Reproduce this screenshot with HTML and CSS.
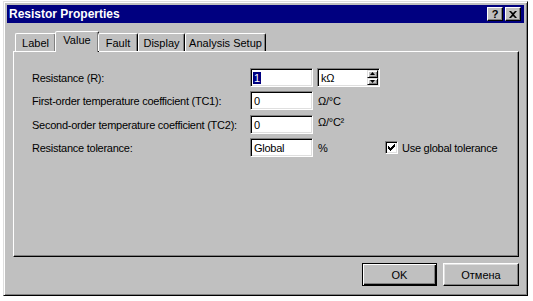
FILE: index.html
```html
<!DOCTYPE html>
<html lang="en">
<head>
  <meta charset="UTF-8">
  <title>Resistor Properties</title>
  <link rel="stylesheet" href="styles.css">
</head>
<body>
  <div class="window">
    <div class="titlebar">
      <span class="title">Resistor Properties</span>
      <div class="title-buttons">
        <span class="tbtn">?</span>
        <span class="tbtn">
          <svg width="8" height="7" viewBox="0 0 8 7"><path d="M0 0h2l2 2 2-2h2L5 3.5 8 7H6L4 5 2 7H0l3-3.5z" fill="#000"/></svg>
        </span>
      </div>
    </div>

    <div class="content">
      <!-- tabs -->
      <div class="tabs">
        <div class="tab tab-label">Label</div>
        <div class="tab tab-value active">Value</div>
        <div class="tab tab-fault">Fault</div>
        <div class="tab tab-display">Display</div>
        <div class="tab tab-analysis">Analysis Setup</div>
      </div>

      <div class="panel">
        <div class="form">
          <label class="lbl">Resistance (R):</label>
          <div class="field"><span class="sel">1</span></div>
          <div class="combo">
            <span class="combo-text">kΩ</span>
            <div class="spin">
              <span class="spin-btn"><svg width="5" height="3" viewBox="0 0 5 3"><path d="M2.5 0L5 3H0z" fill="#000"/></svg></span>
              <span class="spin-btn"><svg width="5" height="3" viewBox="0 0 5 3"><path d="M0 0h5L2.5 3z" fill="#000"/></svg></span>
            </div>
          </div>
          <span></span>

          <label class="lbl">First-order temperature coefficient (TC1):</label>
          <div class="field">0</div>
          <span class="unit">Ω/°C</span>
          <span></span>

          <label class="lbl">Second-order temperature coefficient (TC2):</label>
          <div class="field">0</div>
          <span class="unit unit-top">Ω/°C²</span>
          <span></span>

          <label class="lbl">Resistance tolerance:</label>
          <div class="field">Global</div>
          <span class="unit">%</span>
          <div class="check">
            <span class="box">
              <svg width="7" height="7" viewBox="0 0 7 7"><path d="M0 2h1v1h1v1h1V3h1V2h1V1h1V0h1v3H6v1H5v1H4v1H3v1H2V6H1V5H0z" fill="#000"/></svg>
            </span>
            <span>Use global tolerance</span>
          </div>
        </div>
      </div>

      <div class="actions">
        <button class="btn default">OK</button>
        <button class="btn">Отмена</button>
      </div>
    </div>
  </div>
</body>
</html>
```

FILE: styles.css
```css
* {
  margin: 0;
  padding: 0;
  box-sizing: border-box;
}
body {
  background-color: #ffffff;
  font-family: "Liberation Sans", Arial, sans-serif;
  font-size: 11px;
  letter-spacing: -0.25px;
  color: #000;
}
.window {
  margin: 1px 0 0 3px;
  width: 525px;
  height: 295px;
  background-color: #c0c0c0;
  border: 1px solid;
  border-color: #dfdfdf #000 #000 #dfdfdf;
  box-shadow: inset 1px 1px #fff, inset -1px -1px #808080;
  padding: 3px;
  display: flex;
  flex-direction: column;
}
.titlebar {
  height: 18px;
  background-color: #000080;
  color: #fff;
  display: flex;
  align-items: center;
  justify-content: space-between;
  padding: 0 3px 0 2px;
}
.title {
  font-weight: bold;
  font-size: 12px;
  letter-spacing: 0;
}
.title-buttons {
  display: flex;
  gap: 2px;
}
.tbtn {
  width: 16px;
  height: 14px;
  background-color: #c0c0c0;
  border: 1px solid;
  border-color: #fff #000 #000 #fff;
  box-shadow: inset -1px -1px #808080;
  color: #000;
  font-weight: bold;
  font-size: 11px;
  line-height: 11px;
  display: flex;
  align-items: center;
  justify-content: center;
}
.content {
  flex: 1;
  padding: 8px 5px 0 6px;
  display: flex;
  flex-direction: column;
}
.tabs {
  display: flex;
  align-items: flex-end;
  padding-left: 2px;
  height: 20px;
  position: relative;
  z-index: 1;
  letter-spacing: 0;
}
.tab {
  height: 18px;
  border: 1px solid;
  border-bottom: none;
  border-color: #fff #000 transparent #fff;
  box-shadow: inset -1px 0 #808080;
  border-radius: 2px 2px 0 0;
  text-align: center;
  line-height: 17px;
  padding-top: 1px;
}
.tab-label { width: 41px; }
.tab-value { width: 44px; }
.tab-fault { width: 40px; }
.tab-display { width: 47px; }
.tab-analysis { width: 81px; }
.tab.active {
  height: 21px;
  margin: 0 -1px -1px -1px;
  background-color: #c0c0c0;
  padding-top: 0;
}
.panel {
  height: 206px;
  border: 1px solid;
  border-color: #fff #000 #000 #fff;
  box-shadow: inset -1px -1px #808080;
  padding: 16px 0 0 18px;
}
.form {
  display: grid;
  grid-template-columns: 218px 63px 69px auto;
  grid-template-rows: 19px 20px 19px 19px;
  row-gap: 4px;
  align-items: start;
}
.lbl {
  align-self: center;
  white-space: nowrap;
}
.field {
  height: 19px;
  background-color: #fff;
  border: 1px solid;
  border-color: #808080 #fff #fff #808080;
  box-shadow: inset 1px 1px #000, inset -1px -1px #dfdfdf;
  padding: 2px 0 0 3px;
  line-height: 14px;
}
.sel {
  background-color: #000080;
  color: #fff;
  padding: 0 1px;
  margin-left: -1px;
}
.combo {
  margin-left: 4px;
  width: 63px;
  height: 19px;
  background-color: #fff;
  border: 1px solid;
  border-color: #808080 #fff #fff #808080;
  box-shadow: inset 1px 1px #000, inset -1px -1px #dfdfdf;
  display: flex;
  justify-content: space-between;
  padding: 1px 1px 1px 3px;
}
.combo-text {
  line-height: 15px;
  padding-top: 1px;
}
.spin {
  display: flex;
  flex-direction: column;
  width: 11px;
}
.spin-btn {
  flex: 1;
  background-color: #c0c0c0;
  border: 1px solid;
  border-color: #dfdfdf #000 #000 #dfdfdf;
  box-shadow: inset 1px 1px #fff, inset -1px -1px #808080;
  display: flex;
  align-items: center;
  justify-content: center;
}
.unit {
  margin-left: 5px;
  align-self: center;
}
.unit-top {
  align-self: start;
  padding-top: 1px;
}
.check {
  display: flex;
  align-items: center;
  gap: 4px;
  align-self: center;
  margin-left: 3px;
}
.box {
  width: 13px;
  height: 13px;
  background-color: #fff;
  border: 1px solid;
  border-color: #808080 #fff #fff #808080;
  box-shadow: inset 1px 1px #000, inset -1px -1px #dfdfdf;
  display: flex;
  align-items: center;
  justify-content: center;
}
.actions {
  display: flex;
  justify-content: flex-end;
  gap: 6px;
  margin-top: 6px;
}
.btn {
  width: 76px;
  height: 23px;
  background-color: #c0c0c0;
  border: 1px solid;
  border-color: #fff #000 #000 #fff;
  box-shadow: inset -1px -1px #808080, inset 1px 1px #dfdfdf;
  font-family: "Liberation Sans", Arial, sans-serif;
  font-size: 11px;
  color: #000;
}
.btn.default {
  width: 75px;
  border: 1px solid #000;
  box-shadow: inset 1px 1px #fff, inset -1px -1px #000, inset -2px -2px #808080;
}
```
